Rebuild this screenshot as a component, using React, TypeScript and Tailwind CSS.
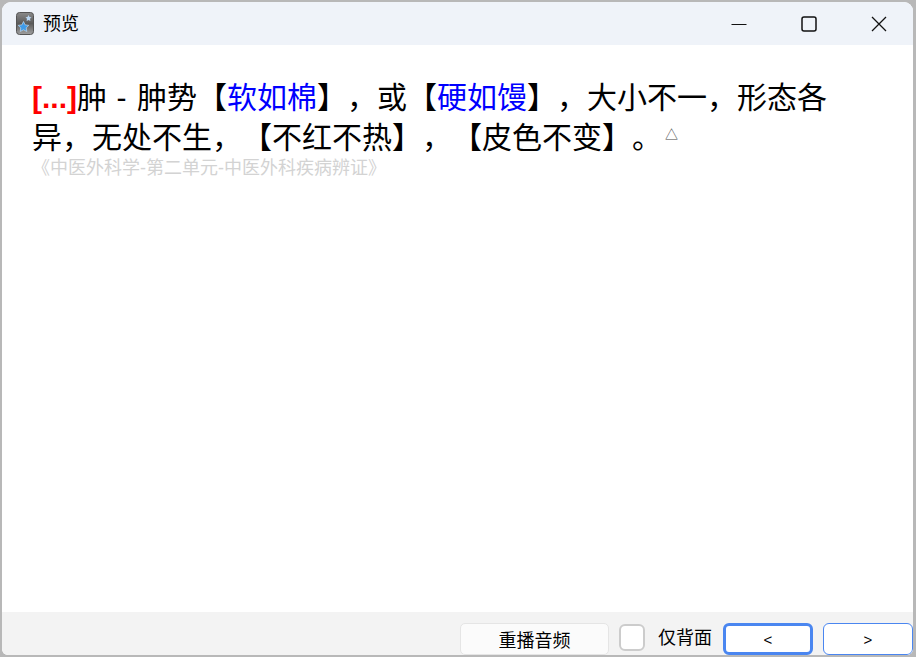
import React from 'react';

const FONT = "font-['Liberation_Sans','Noto_Sans_CJK_SC',sans-serif]";

const AppIcon = () => (
  <svg width="18" height="23" viewBox="0 0 18 23" className="shrink-0">
    <defs>
      <linearGradient id="tile" x1="0" y1="0" x2="0" y2="1">
        <stop offset="0" stopColor="#8a8a8a" />
        <stop offset="0.5" stopColor="#5a5a5a" />
        <stop offset="1" stopColor="#a0a0a0" />
      </linearGradient>
    </defs>
    <rect x="0.5" y="0.5" width="17" height="22" rx="3" fill="url(#tile)" stroke="#555" />
    <path d="M12.5 3l1 2 2 .3-1.5 1.5.4 2.2-1.9-1-1.9 1 .4-2.2-1.5-1.5 2-.3z" fill="#b9d6f2" />
    <path d="M7.5 9.5l1.7 3.4 3.6.5-2.6 2.5.6 3.6-3.3-1.7-3.3 1.7.6-3.6-2.6-2.5 3.6-.5z" fill="#3f9be8" stroke="#cfe6fa" strokeWidth="0.6" />
  </svg>
);

const WindowControls = () => (
  <div className="flex items-center h-full text-[#111]">
    <div className="w-[70px] h-full flex items-center justify-center">
      <svg width="16" height="16" viewBox="0 0 16 16"><path d="M0.5 8.5h15" stroke="currentColor" strokeWidth="1.2" /></svg>
    </div>
    <div className="w-[70px] h-full flex items-center justify-center">
      <svg width="16" height="16" viewBox="0 0 16 16"><rect x="1" y="1" width="14" height="14" rx="2" fill="none" stroke="currentColor" strokeWidth="1.5" /></svg>
    </div>
    <div className="w-[70px] h-full flex items-center justify-center">
      <svg width="16" height="16" viewBox="0 0 16 16"><path d="M1 1l14 14M15 1L1 15" stroke="currentColor" strokeWidth="1.3" /></svg>
    </div>
  </div>
);

export default function App() {
  return (
    <div className={`w-[916px] h-[657px] overflow-hidden bg-[#b8b8b8] p-[2px] pr-[3px] ${FONT}`}>
      <div className="w-full h-full flex flex-col overflow-hidden rounded-t-[9px] rounded-b-[6px] bg-white">
        <div className="h-[43px] shrink-0 flex items-center justify-between bg-[#eff3f9]">
          <div className="flex items-center pl-[14px] gap-[9px]">
            <AppIcon />
            <span className="text-[18px] text-black leading-none">预览</span>
          </div>
          <div className="h-full -mr-[1px]">
            <WindowControls />
          </div>
        </div>

        <div className="flex-1 pl-[30px] pr-[60px] pt-[33px] bg-white">
          <div className="text-[30px] leading-[40px] text-black [text-spacing-trim:space-all]">
            <span className="font-bold text-[#ff0000]">[...]</span>肿<span className="tracking-[1.1px]"> - </span>肿势【<span className="text-[#0000ff]">软如棉</span>】，或【<span className="text-[#0000ff]">硬如馒</span>】，大小不一，形态各异，无处不生，【不红不热】，【皮色不变】。
            <span className="text-[13px] leading-none align-[9px] ml-[3px] text-[#444]">△</span>
          </div>
          <div className="text-[18px] leading-[22px] -mt-[1px] text-[#d3d3d3] [text-spacing-trim:space-all]">《中医外科学-第二单元-中医外科疾病辨证》</div>
        </div>

        <div className="h-[43px] shrink-0 flex items-start justify-end bg-[#f3f3f3] pt-[11px]">
          <button className="w-[149px] h-[32px] pt-[3px] rounded-[5px] border border-[#e5e5e5] bg-[#fbfbfb] text-[18px] leading-none text-black">重播音频</button>
          <div className="ml-[10px] mt-[1px] w-[26px] h-[27px] rounded-[6px] border-2 border-[#cccccc] bg-white" />
          <span className="ml-[13px] text-[18px] leading-[30px] text-black">仅背面</span>
          <button className="ml-[11px] w-[90px] h-[32px] pt-[1px] rounded-[6px] border-[3px] border-[#4a86f0] bg-white text-[15px] leading-none text-black">&lt;</button>
          <button className="ml-[10px] w-[90px] h-[32px] pt-[1px] rounded-[6px] border-[1.5px] border-[#4a86f0] bg-white text-[15px] leading-none text-black">&gt;</button>
        </div>
      </div>
    </div>
  );
}
